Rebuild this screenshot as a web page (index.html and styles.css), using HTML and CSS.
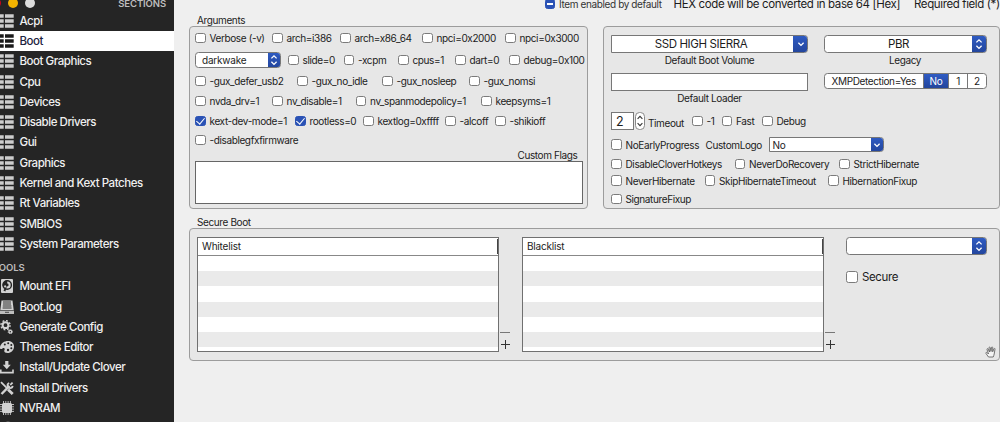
FILE: index.html
```
<!DOCTYPE html>
<html lang="en">
<head>
    <title>Boot</title>
    <meta charset="UTF-8">
    <meta name="viewport" content="width=device-width, initial-scale=1.0">
    <link rel="stylesheet" href="styles.css">
</head>
<body>
    <!-- shared icons -->
    <svg class="defs" width="0" height="0">
        <symbol id="list" viewBox="0 0 14 14">
            <path d="M0 .3h3.7v3.4H0zM5 .3h8.7v3.4H5zM0 5.3h3.7v3.4H0zM5 5.3h8.7v3.4H5zM0 10.3h3.7v3.4H0zM5 10.3h8.7v3.4H5z" fill="currentColor"/>
        </symbol>
        <symbol id="updown" viewBox="0 0 14 16">
            <path d="M4.4 6.4L7 3.8l2.6 2.6M4.4 9.8L7 12.4l2.6-2.6" fill="none" stroke="currentColor" stroke-width="1.3"/>
        </symbol>
        <symbol id="down" viewBox="0 0 14 16">
            <path d="M4.4 6.8L7 9.4l2.6-2.6" fill="none" stroke="currentColor" stroke-width="1.3"/>
        </symbol>
    </svg>

    <nav class="sidebar">
        <div class="titlebar">
            <i class="light red"></i><i class="light yellow"></i><i class="light gray"></i>
            <span>SECTIONS</span>
        </div>
        <a class="item"><svg><use href="#list"/></svg>Acpi</a>
        <a class="item active"><svg><use href="#list"/></svg>Boot</a>
        <a class="item"><svg><use href="#list"/></svg>Boot Graphics</a>
        <a class="item"><svg><use href="#list"/></svg>Cpu</a>
        <a class="item"><svg><use href="#list"/></svg>Devices</a>
        <a class="item"><svg><use href="#list"/></svg>Disable Drivers</a>
        <a class="item"><svg><use href="#list"/></svg>Gui</a>
        <a class="item"><svg><use href="#list"/></svg>Graphics</a>
        <a class="item"><svg><use href="#list"/></svg>Kernel and Kext Patches</a>
        <a class="item"><svg><use href="#list"/></svg>Rt Variables</a>
        <a class="item"><svg><use href="#list"/></svg>SMBIOS</a>
        <a class="item"><svg><use href="#list"/></svg>System Parameters</a>
        <div class="group"><span>TOOLS</span></div>
        <a class="item">
            <svg viewBox="0 0 14 14"><rect x="1" width="12" height="14" rx="1" fill="#d2d2d2"/><circle cx="7.200" cy="6" r="4.200" fill="#d2d2d2" stroke="#252525" stroke-width="1.400"/><path d="M7.200 6V1.500A4.500 4.500 0 0 0 2.700 7zM7.200 6l-3.800 5.500 2 .9z" fill="#252525"/><circle cx="7.200" cy="6" r="1.400" fill="#252525"/></svg>Mount EFI
        </a>
        <a class="item">
            <svg viewBox="0 0 14 14"><path d="M1.500.500h11l1.200 9.500H.300z" fill="#d2d2d2"/><path d="M3 2h8M3 4h8M2.800 6h8.600M2.600 8h9" stroke="#333"/><path d="M0 10.600h14V14H0z" fill="#bdbdbd"/><path d="M5 12.300h4" stroke="#444"/></svg>Boot.log
        </a>
        <a class="item">
            <svg viewBox="0 0 14 14" fill="none" stroke="#d2d2d2"><circle cx="5.500" cy="5.200" r="2.900" stroke-width="2"/><circle cx="5.500" cy="5.200" r="4.600" stroke-width="1.400" stroke-dasharray="1.800 1.810"/><circle cx="10.300" cy="11.700" r="1.400" stroke-width="1.300"/><circle cx="10.300" cy="11.700" r="2.200" stroke-width=".9" stroke-dasharray=".86 .86"/></svg>Generate Config
        </a>
        <a class="item">
            <svg viewBox="0 0 14 14"><path d="M0 7C1 3 4.500 1 8 1c4 0 6 2.600 6 5.500 0 4-3 6.500-6.500 6.500-2.800 0-3.800-1.400-3-3C5.300 8.400 3.600 7.600 2.500 8.500 1 9.700-.400 9 0 7z" fill="#d2d2d2"/><g fill="#252525"><circle cx="4.800" cy="4.500" r="1"/><circle cx="8.200" cy="3.300" r="1"/><circle cx="11.300" cy="5" r="1"/><circle cx="11.300" cy="8.200" r="1"/><circle cx="8" cy="10" r="1.200"/></g></svg>Themes Editor
        </a>
        <a class="item">
            <svg viewBox="0 0 14 14" fill="#d2d2d2"><path d="M5.200 1h3.200v3.800h2.400L6.800 9.200 2.800 4.800h2.400z"/><path d="M0 9.500h1.600v2.200h10.600V9.500h1.600v4H0z"/></svg>Install/Update Clover
        </a>
        <a class="item">
            <svg viewBox="0 0 14 14" fill="none" stroke="#d2d2d2"><path d="M1.500 13l8-8.200" stroke-width="2.400"/><path d="M12.600 1.600l-1.800 1.800-.6-.4M9.200 2A2.600 2.600 0 1 0 12.700 4.800" stroke-width="1.800"/><path d="M1 1.200l6 6" stroke-width="1.800"/><path d="M8 8.500l4.700 4.500" stroke-width="2.800"/></svg>Install Drivers
        </a>
        <a class="item">
            <svg viewBox="0 0 14 14"><path d="M3.500 0v14M5.800 0v14M8.100 0v14M10.400 0v14M0 3.500h14M0 5.800h14M0 8.100h14M0 10.400h14" stroke="#bbb"/><rect x="2" y="2" width="10" height="10" rx="1.500" fill="#d2d2d2"/></svg>NVRAM
        </a>
        <a class="item last"><svg viewBox="0 0 14 14"><circle cx="8" cy="7" r="6.500" fill="#888"/></svg></a>
    </nav>

    <main>
        <header>
            <i class="box mixed"></i>
            <span class="small">Item enabled by default</span>
            <span class="hex">HEX code will be converted in base 64 [Hex]</span>
            <span class="required">Required field (*)</span>
        </header>

        <div class="columns">
            <section class="arguments">
                <h2>Arguments</h2>
                <div class="panel">
                    <div class="row r1">
                        <label><i class="box"></i>Verbose (-v)</label>
                        <label><i class="box"></i>arch=i386</label>
                        <label><i class="box"></i>arch=x86_64</label>
                        <label><i class="box"></i>npci=0x2000</label>
                        <label><i class="box"></i>npci=0x3000</label>
                    </div>
                    <div class="row r2">
                        <div class="select darkwake"><span>darkwake</span><b><svg><use href="#updown"/></svg></b></div>
                        <label><i class="box"></i>slide=0</label>
                        <label><i class="box"></i>-xcpm</label>
                        <label><i class="box"></i>cpus=1</label>
                        <label><i class="box"></i>dart=0</label>
                        <label><i class="box"></i>debug=0x100</label>
                    </div>
                    <div class="row r3">
                        <label><i class="box"></i>-gux_defer_usb2</label>
                        <label><i class="box"></i>-gux_no_idle</label>
                        <label><i class="box"></i>-gux_nosleep</label>
                        <label><i class="box"></i>-gux_nomsi</label>
                    </div>
                    <div class="row r4">
                        <label><i class="box"></i>nvda_drv=1</label>
                        <label><i class="box"></i>nv_disable=1</label>
                        <label><i class="box"></i>nv_spanmodepolicy=1</label>
                        <label><i class="box"></i>keepsyms=1</label>
                    </div>
                    <div class="row r5">
                        <label><i class="box checked"></i>kext-dev-mode=1</label>
                        <label><i class="box checked"></i>rootless=0</label>
                        <label><i class="box"></i>kextlog=0xffff</label>
                        <label><i class="box"></i>-alcoff</label>
                        <label><i class="box"></i>-shikioff</label>
                    </div>
                    <div class="row r6">
                        <label><i class="box"></i>-disablegfxfirmware</label>
                    </div>
                    <div class="flags-label">Custom Flags</div>
                    <div class="flags"></div>
                </div>
            </section>

            <section class="volume">
                <div class="panel">
                    <div class="top">
                        <div class="left">
                            <div class="combo big"><span>SSD HIGH SIERRA</span><b><svg><use href="#down"/></svg></b></div>
                            <p class="caption">Default Boot Volume</p>
                            <div class="field"></div>
                            <p class="caption loader">Default Loader</p>
                        </div>
                        <div class="right">
                            <div class="select big"><span>PBR</span><b><svg><use href="#updown"/></svg></b></div>
                            <p class="caption">Legacy</p>
                            <div class="segments">
                                <span>XMPDetection=Yes</span><span class="on">No</span><span>1</span><span>2</span>
                            </div>
                        </div>
                    </div>
                    <div class="row timeout">
                        <div class="field">2</div>
                        <div class="stepper"><svg viewBox="0 0 10 18"><path d="M2.600 6.800L5 4.400l2.400 2.400M2.600 11.200L5 13.600l2.400-2.400" fill="none" stroke="#333" stroke-width="1.100"/></svg></div>
                        <span class="timeout-label">Timeout</span>
                        <label><i class="box"></i>-1</label>
                        <label><i class="box"></i>Fast</label>
                        <label><i class="box"></i>Debug</label>
                    </div>
                    <div class="row logo">
                        <label><i class="box"></i>NoEarlyProgress</label>
                        <span>CustomLogo</span>
                        <div class="combo"><span>No</span><b><svg><use href="#down"/></svg></b></div>
                    </div>
                    <div class="row v1">
                        <label><i class="box"></i>DisableCloverHotkeys</label>
                        <label><i class="box"></i>NeverDoRecovery</label>
                        <label><i class="box"></i>StrictHibernate</label>
                    </div>
                    <div class="row v2">
                        <label><i class="box"></i>NeverHibernate</label>
                        <label><i class="box"></i>SkipHibernateTimeout</label>
                        <label><i class="box"></i>HibernationFixup</label>
                    </div>
                    <div class="row v3">
                        <label><i class="box"></i>SignatureFixup</label>
                    </div>
                </div>
            </section>
        </div>

        <section class="secure">
            <h2>Secure Boot</h2>
            <div class="panel">
                <div class="table">
                    <div class="th">Whitelist</div>
                    <div class="tbody"></div>
                </div>
                <div class="buttons"><i class="minus"></i><i class="plus"></i></div>
                <div class="table">
                    <div class="th">Blacklist</div>
                    <div class="tbody"></div>
                </div>
                <div class="buttons"><i class="minus"></i><i class="plus"></i></div>
                <div class="policy">
                    <div class="select big"><span></span><b><svg><use href="#updown"/></svg></b></div>
                    <label><i class="box"></i>Secure</label>
                </div>
                <svg class="hand" viewBox="0 0 12 12"><path d="M3.500 11L1 7.500c-.6-1 .6-1.500 1.200-.8L3.500 8 2 3.500c-.2-1 .9-1.200 1.200-.4L4.500 6 4 1.800c0-1 1.100-1 1.300-.1L6 5.500l.5-4c.1-.9 1.200-.8 1.200.1v4.200l1.200-3c.4-.8 1.300-.4 1.100.4L9.200 8c-.2 1.500-.7 2-1 3z" fill="#f4f4f4" stroke="#555" stroke-width=".8"/></svg>
            </div>
        </section>
    </main>
</body>
</html>
```
FILE: styles.css
```
* {
    box-sizing: border-box;
}

body {
    margin: 0;
    width: 1000px;
    height: 422px;
    overflow: hidden;
    display: flex;
    background-color: #efefef;
    font-family: Inter, "Liberation Sans", sans-serif;
    font-size: 10px;
    letter-spacing: -0.38px;
    color: #1c1c1c;
}

h2, p {
    margin: 0;
    font-size: 10px;
    font-weight: 400;
}

.defs {
    position: absolute;
}

/* sidebar */
.sidebar {
    width: 174px;
    height: 422px;
    flex: none;
    overflow: hidden;
    background-color: #252525;
}

.titlebar {
    height: 10.5px;
    display: flex;
    align-items: center;
    padding: 0 8px 4px 0;
    color: #bdbdbd;
    font-size: 9.5px;
    font-weight: 600;
    letter-spacing: -0.1px;
}

.titlebar span {
    margin-left: auto;
}

.light {
    width: 10px;
    height: 10px;
    flex: none;
    border-radius: 50%;
    margin-right: 7px;
}

.red {
    background-color: #d0021b;
    margin-left: -9.5px;
}

.yellow {
    background-color: #f4b400;
}

.gray {
    background-color: #dcdcdc;
}

.item {
    height: 20.3px;
    display: flex;
    align-items: center;
    color: #f0f0f0;
    font-size: 11.5px;
    font-weight: 500;
    letter-spacing: -0.46px;
    white-space: nowrap;
}

.item svg {
    width: 14px;
    height: 14px;
    flex: none;
    margin-right: 5.5px;
    color: #cdcdcd;
}

.item.active {
    background-color: #fff;
    color: #1c2340;
}

.item.active svg {
    color: #1a1a1a;
}

.group {
    height: 22px;
    padding-top: 8px;
    color: #bdbdbd;
    font-size: 9.5px;
    font-weight: 600;
    letter-spacing: -0.1px;
    line-height: 12px;
}

.group span {
    margin-left: -7px;
}

/* controls */
.box {
    width: 10.5px;
    height: 10.5px;
    flex: none;
    background-color: #fff;
    border: 1px solid #7b7b7b;
    border-radius: 2.5px;
}

.box.checked, .box.mixed {
    background-color: #2a52b5;
    border-color: #2a52b5;
    display: flex;
    align-items: center;
    justify-content: center;
}

.box.checked::after {
    content: "";
    width: 4px;
    height: 7px;
    flex: none;
    margin-top: -2px;
    border: solid #fff;
    border-width: 0 1.4px 1.4px 0;
    transform: rotate(40deg);
}

.box.mixed::after {
    content: "";
    width: 6px;
    height: 1.5px;
    background-color: #fff;
}

label {
    display: flex;
    align-items: center;
    gap: 4px;
    white-space: nowrap;
}

.select, .combo {
    display: flex;
    height: 16px;
    overflow: hidden;
    background-color: #fff;
    border: 1px solid #777;
    border-radius: 3.5px;
}

.combo {
    border-radius: 0 3.5px 3.5px 0;
}

.select span, .combo span {
    flex: 1;
    display: flex;
    align-items: center;
}

.select b, .combo b {
    width: 13px;
    flex: none;
    margin: -1px;
    display: flex;
    align-items: center;
    justify-content: center;
    background: linear-gradient(#2f5cc4, #23459c);
    color: #fff;
}

.select svg, .combo svg {
    width: 14px;
    height: 16px;
    flex: none;
}

.big {
    height: 18px;
    font-size: 11.5px;
}

.big span {
    justify-content: center;
}

.combo.big span {
    padding-right: 4px;
}

.big b {
    width: 15px;
}

.field {
    height: 18px;
    background-color: #fff;
    border: 1px solid #777;
}

.panel {
    background-color: #e7e7e7;
    border: 1px solid #9c9c9c;
    border-radius: 4px;
}

.row {
    display: grid;
    align-items: center;
    height: 20px;
}

/* main */
main {
    width: 826px;
    flex: none;
    padding-left: 15px;
}

header {
    height: 15px;
    padding: 0 0 7px 355.5px;
    display: flex;
    align-items: center;
    white-space: nowrap;
    font-size: 11.5px;
}

header .small {
    width: 114.5px;
    flex: none;
    margin-left: 4px;
    font-size: 10px;
    color: #333;
}

header .hex {
    width: 240.5px;
    flex: none;
}

.columns {
    display: flex;
    gap: 15px;
}

h2 {
    height: 11px;
    line-height: 11px;
    padding-left: 8px;
}

.arguments {
    width: 399px;
    flex: none;
}

.arguments .panel {
    height: 183px;
    padding: 1px 4.5px 0 5px;
}

.r1 {
    grid-template-columns: 77px 68px 82px 83px 80px;
}

.r2 {
    height: 24px;
    grid-template-columns: 93px 55.5px 54.5px 57px 54px 80px;
}

.r3 {
    height: 18px;
    grid-template-columns: 102px 85px 87px 80px;
}

.r4 {
    height: 22px;
    grid-template-columns: 77px 83.5px 125.5px 80px;
}

.r5 {
    height: 18px;
    grid-template-columns: 100px 68px 82px 50px 80px;
}

.r6 {
    height: 20px;
}

.darkwake {
    width: 85.5px;
    padding-left: 6px;
    letter-spacing: -0.2px;
}

.flags-label {
    height: 11px;
    line-height: 11px;
    padding-right: 5px;
    text-align: right;
}

.flags {
    height: 43px;
    background-color: #fff;
    border: 1px solid #666;
}

.volume {
    width: 397px;
    flex: none;
    padding-top: 11px;
}

.volume .panel {
    height: 183px;
    padding: 8px 0 0 7px;
}

.top {
    display: flex;
    gap: 15.5px;
}

.left {
    width: 197px;
}

.right {
    width: 163px;
}

.caption {
    height: 20px;
    line-height: 14px;
    text-align: center;
}

.loader {
    line-height: 15px;
}

.segments {
    height: 15.5px;
    display: grid;
    grid-template-columns: 98.5px 25px 19px 1fr;
    overflow: hidden;
    background-color: #fff;
    border: 1px solid #777;
    border-radius: 3.5px;
}

.segments span {
    display: flex;
    align-items: center;
    justify-content: center;
    border-left: 1px solid #777;
}

.segments span:first-child {
    border-left: none;
}

.segments .on {
    background: linear-gradient(#2f5cc4, #23459c);
    color: #fff;
}

.timeout {
    grid-template-columns: 24px 13px 44px 29.5px 40.5px 60px;
}

.timeout .field {
    width: 23px;
    padding-left: 4px;
    font-size: 12.5px;
    line-height: 17px;
}

.stepper {
    width: 10px;
    height: 18px;
    background-color: #fff;
    border: 1px solid #888;
    border-radius: 4.5px;
}

.stepper svg {
    display: block;
    width: 10px;
    height: 18px;
    margin: -1px;
}

.timeout-label {
    padding-top: 4px;
}

.logo {
    height: 27px;
    grid-template-columns: 94.5px 63px 115px;
}

.logo .combo {
    height: 15px;
    padding-left: 3px;
}

.v1 {
    height: 10px;
    grid-template-columns: 123.5px 104.5px 90px;
}

.v2 {
    height: 25px;
    grid-template-columns: 93.5px 123.5px 90px;
}

.v3 {
    height: 10px;
}

.secure {
    padding-top: 7.5px;
}

.secure .panel {
    display: flex;
    height: 133px;
    padding: 8.5px 0 0 7px;
}

.table {
    width: 302px;
    height: 115px;
    flex: none;
    background-color: #fff;
    border: 1px solid #707070;
}

.th {
    display: flex;
    height: 18px;
    line-height: 17px;
    padding-left: 4px;
    letter-spacing: -0.2px;
    border-bottom: 1px solid #888;
}

.th::after {
    content: "";
    width: 1px;
    margin: 1px 0 1px auto;
    background-color: #444;
}

.tbody {
    height: 95px;
    background: repeating-linear-gradient(#fff 0, #fff 15.2px, #eaeaea 15.2px, #eaeaea 30.4px);
}

.buttons {
    width: 23px;
    height: 115px;
    flex: none;
    display: flex;
    flex-direction: column;
    align-items: center;
    padding: 95px 11px 0 0;
}

.minus {
    width: 10px;
    height: 1px;
    flex: none;
    background-color: #777;
}

.plus {
    width: 9px;
    height: 9px;
    flex: none;
    margin-top: 7px;
    background: linear-gradient(#333, #333) center / 9px 1px no-repeat,
        linear-gradient(#333, #333) center / 1px 9px no-repeat;
}

.policy {
    width: 140.5px;
    flex: none;
    margin-left: -1px;
}

.policy label {
    margin-top: 15px;
    font-size: 11.5px;
}

.policy .box {
    width: 12px;
    height: 12px;
}

.hand {
    width: 12px;
    height: 12px;
    flex: none;
    margin: 109px 0 0 -2px;
}
```
